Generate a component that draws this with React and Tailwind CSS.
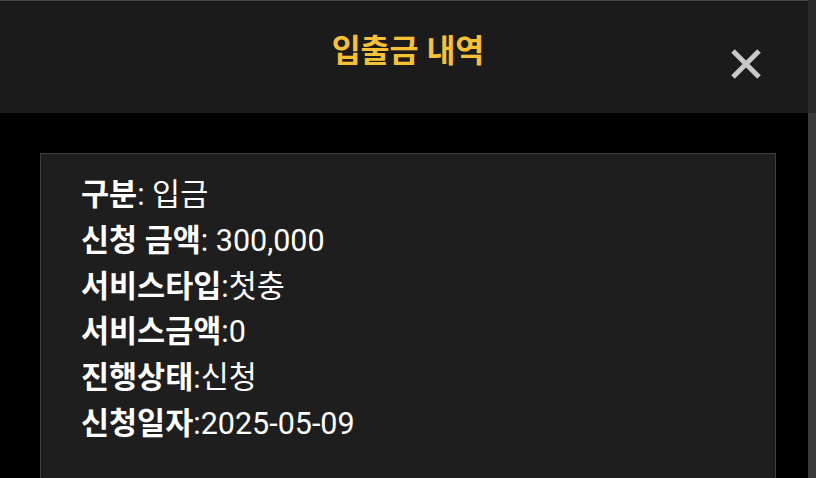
import React from "react";

const rows = [
  { label: "구분", value: ": 입금" },
  { label: "신청 금액", value: ": 300,000" },
  { label: "서비스타입", value: ":첫충" },
  { label: "서비스금액", value: ":0" },
  { label: "진행상태", value: ":신청" },
  { label: "신청일자", value: ":2025-05-09" },
];

function CloseIcon() {
  return (
    <svg width="32" height="32" viewBox="0 0 32 32" fill="none">
      <path d="M3 3 L29 29 M29 3 L3 29" stroke="#c9c9c9" strokeWidth="5" strokeLinecap="butt" />
    </svg>
  );
}

export default function App() {
  return (
    <div
      className="relative h-[478px] w-[816px] overflow-hidden bg-black"
      style={{ fontFamily: "Roboto, 'Noto Sans CJK KR', sans-serif" }}
    >
      {/* header */}
      <div className="relative flex h-[113px] items-center justify-center border-t border-[#454545] bg-[#1b1b1b]">
        <h1 className="-mt-[11px] text-[31.5px] font-bold text-[#f7c133]">입출금 내역</h1>
        <button className="absolute right-[54px] top-[47px] flex h-[32px] w-[32px] items-center justify-center">
          <CloseIcon />
        </button>
      </div>

      {/* body */}
      <div className="px-[40px] pt-[40px]">
        <div className="h-[400px] border border-[#3e3e3e] bg-[#1e1e1e] px-[40px] pt-[18px]">
          {rows.map((r) => (
            <div key={r.label} className="text-[30.5px] leading-[1.5] text-white">
              <span className="font-bold">{r.label}</span>
              <span>{r.value}</span>
            </div>
          ))}
        </div>
      </div>

      {/* scrollbar */}
      <div className="absolute right-0 top-0 flex h-full w-[8px] flex-col">
        <div className="h-[113px] bg-[#2a2a2a]" />
        <div className="flex-1 bg-[#3a3a3a]" />
      </div>
    </div>
  );
}
